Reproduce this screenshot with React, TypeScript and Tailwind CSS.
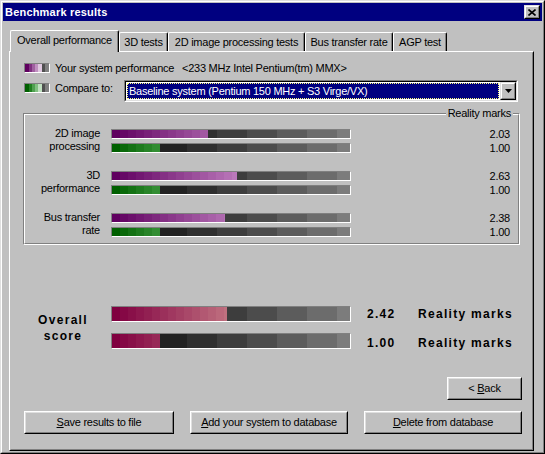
import React from 'react';

type Step = { w: number; c: string };

// Gray scale behind every meter (widths in px inside the 238px track)
const TRACK: Step[] = [
  { w: 45, c: '#181818' },
  { w: 30, c: '#222222' },
  { w: 30, c: '#2f2f2f' },
  { w: 30, c: '#3d3d3d' },
  { w: 30, c: '#4c4c4c' },
  { w: 30, c: '#5c5c5c' },
  { w: 30, c: '#6c6c6c' },
  { w: 13, c: '#7c7c7c' },
];

const hex = (r: number, g: number, b: number) =>
  '#' +
  [r, g, b]
    .map((v) => Math.max(0, Math.min(255, Math.round(v))).toString(16).padStart(2, '0'))
    .join('');

const purple = (k: number) => hex(96 + k * 6, k * 8, 96 + k * 6);
const green = (k: number) => hex(k * 10, 96 + k * 9, k * 10);
const crimson = (k: number) => hex(128 + k * 4.5, k * 8, 64 + k * 4.5);

function steps(width: number, tone: (k: number) => string): Step[] {
  const out: Step[] = [];
  for (let x = 0, k = 0; x < width; x += 8, k++) out.push({ w: Math.min(8, width - x), c: tone(k) });
  return out;
}

function Meter({ value, tone, tall = false }: { value: number; tone: (k: number) => string; tall?: boolean }) {
  const fill = steps(Math.round(value * 47.5), tone);
  return (
    <div
      className={`relative flex w-[240px] shrink-0 overflow-hidden border border-t-[#808080] border-l-[#808080] border-r-white border-b-white ${
        tall ? 'h-[16px]' : 'h-[10px]'
      }`}
    >
      {TRACK.map((s, i) => (
        <div key={i} className="h-full shrink-0" style={{ width: s.w, backgroundColor: s.c }} />
      ))}
      <div className="absolute inset-y-0 left-0 flex">
        {fill.map((s, i) => (
          <div key={i} className="h-full shrink-0" style={{ width: s.w, backgroundColor: s.c }} />
        ))}
      </div>
    </div>
  );
}

function Swatch({ colors }: { colors: Step[] }) {
  return (
    <div className="flex w-[26px] h-[10px] shrink-0 border border-t-[#808080] border-l-[#808080] border-r-white border-b-white">
      {colors.map((s, i) => (
        <div key={i} className="h-full shrink-0" style={{ width: s.w, backgroundColor: s.c }} />
      ))}
    </div>
  );
}

function Raised({ className = '', children }: { className?: string; children?: React.ReactNode }) {
  return (
    <div
      className={`bg-[#c0c0c0] border border-t-[#dfdfdf] border-l-[#dfdfdf] border-r-black border-b-black ${className}`}
    >
      <div className="w-full h-full border border-t-white border-l-white border-r-[#808080] border-b-[#808080] flex items-center justify-center">
        {children}
      </div>
    </div>
  );
}

function Button({ className = '', children }: { className?: string; children: React.ReactNode }) {
  return (
    <button
      type="button"
      className={`bg-[#c0c0c0] border border-t-white border-l-white border-r-black border-b-black ${className}`}
    >
      <div className="w-full h-full border border-t-[#dfdfdf] border-l-[#dfdfdf] border-r-[#808080] border-b-[#808080] flex items-center justify-center whitespace-nowrap">
        {children}
      </div>
    </button>
  );
}

const TABS = [
  { label: 'Overall performance', w: 'w-[109px]', active: true },
  { label: '3D tests', w: 'w-[49px]', active: false },
  { label: '2D image processing tests', w: 'w-[137px]', active: false },
  { label: 'Bus transfer rate', w: 'w-[88px]', active: false },
  { label: 'AGP test', w: 'w-[54px]', active: false },
];

const ROWS = [
  { label: ['2D image', 'processing'], you: 2.03, base: 1.0 },
  { label: ['3D', 'performance'], you: 2.63, base: 1.0 },
  { label: ['Bus transfer', 'rate'], you: 2.38, base: 1.0 },
];

const YOU_SWATCH: Step[] = [
  { w: 4, c: '#600060' },
  { w: 3, c: '#803080' },
  { w: 3, c: '#a060a0' },
  { w: 3, c: '#c090c0' },
  { w: 4, c: '#e0c8e0' },
  { w: 3, c: '#505050' },
  { w: 4, c: '#808080' },
];

const BASE_SWATCH: Step[] = [
  { w: 4, c: '#006000' },
  { w: 3, c: '#208020' },
  { w: 3, c: '#50a050' },
  { w: 3, c: '#80c080' },
  { w: 4, c: '#c0e0c0' },
  { w: 3, c: '#505050' },
  { w: 4, c: '#808080' },
];

export default function App() {
  return (
    <div className="w-[545px] h-[454px] bg-[#c0c0c0] border border-t-[#dfdfdf] border-l-[#dfdfdf] border-r-black border-b-black font-['Liberation_Sans',Arial,sans-serif] text-[11px] leading-[13px] tracking-[-0.25px] text-black select-none">
      <div className="h-full flex flex-col border border-t-white border-l-white border-r-[#808080] border-b-[#808080] p-px">
        {/* Title bar */}
        <div className="h-[18px] shrink-0 bg-[#000080] flex items-center justify-between px-[2px]">
          <span className="font-bold text-white tracking-[0.2px]">Benchmark results</span>
          <Raised className="w-[16px] h-[14px]">
            <svg width="8" height="7" viewBox="0 0 8 7">
              <path d="M0.5 0.5L7.5 6.5M7.5 0.5L0.5 6.5" stroke="black" strokeWidth="1.6" />
            </svg>
          </Raised>
        </div>

        {/* Client area */}
        <div className="flex-1 flex flex-col pt-[9px] pl-[6px] pr-[8px]">
          {/* Tab strip */}
          <div className="flex items-end pl-[1px]">
            {TABS.map((t) => (
              <div
                key={t.label}
                className={`${t.w} ${
                  t.active ? 'h-[22px] -mb-[1px] relative z-10' : 'h-[19px]'
                } bg-[#c0c0c0] border-t border-l border-r border-t-white border-l-white border-r-black rounded-t-[2px] shadow-[inset_-1px_0_0_#808080] flex justify-center pt-[3px] whitespace-nowrap`}
              >
                {t.label}
              </div>
            ))}
          </div>

          {/* Tab panel */}
          <div className="flex-1 flex flex-col border border-t-white border-l-white border-r-black border-b-black">
            <div className="flex-1 flex flex-col border border-t-[#c0c0c0] border-l-[#c0c0c0] border-r-[#808080] border-b-[#808080]">
              {/* Legend */}
              <div className="mt-[8px] ml-[13px] h-[14px] flex items-center">
                <Swatch colors={YOU_SWATCH} />
                <span className="ml-[5px] w-[127px] whitespace-nowrap">Your system performance</span>
                <span className="whitespace-nowrap">&lt;233 MHz Intel Pentium(tm) MMX&gt;</span>
              </div>
              <div className="mt-[5px] ml-[13px] h-[22px] flex items-start">
                <div className="mt-[3px]">
                  <Swatch colors={BASE_SWATCH} />
                </div>
                <span className="ml-[5px] w-[69px] mt-[2px] whitespace-nowrap">Compare to:</span>
                <div className="w-[394px] h-[22px] border border-t-[#808080] border-l-[#808080] border-r-white border-b-white">
                  <div className="h-full flex bg-white border border-t-black border-l-black border-r-[#dfdfdf] border-b-[#dfdfdf]">
                    <div className="flex-1 m-[1px] bg-[#000080] border border-dotted border-[#ffff7f] text-white pl-[1px] flex items-center whitespace-nowrap">
                      Baseline system (Pentium 150 MHz + S3 Virge/VX)
                    </div>
                    <Raised className="w-[16px] h-full">
                      <svg width="7" height="4" viewBox="0 0 7 4">
                        <polygon points="0,0 7,0 3.5,4" fill="black" />
                      </svg>
                    </Raised>
                  </div>
                </div>
              </div>

              {/* Reality marks group */}
              <div className="relative mt-[11px] ml-[12px] w-[497px] border border-t-[#808080] border-l-[#808080] border-r-white border-b-white">
                <span className="absolute -top-[7px] right-[6px] px-[2px] bg-[#c0c0c0] leading-[13px]">
                  Reality marks
                </span>
                <div className="flex flex-col gap-[14px] pt-[12px] pb-[4px] pr-[8px] border border-t-white border-l-white border-r-[#808080] border-b-[#808080]">
                  {ROWS.map((r) => (
                    <div key={r.label[0]} className="flex">
                      <div className="w-[75px] text-right leading-[13px]">
                        {r.label[0]}
                        <br />
                        {r.label[1]}
                      </div>
                      <div className="ml-[11px] flex flex-col">
                        <div className="h-[14px] flex items-center">
                          <Meter value={r.you} tone={purple} />
                        </div>
                        <div className="h-[14px] flex items-center">
                          <Meter value={r.base} tone={green} />
                        </div>
                      </div>
                      <div className="flex-1 flex flex-col items-end">
                        <div className="h-[14px] flex items-center">{r.you.toFixed(2)}</div>
                        <div className="h-[14px] flex items-center">{r.base.toFixed(2)}</div>
                      </div>
                    </div>
                  ))}
                </div>
              </div>

              {/* Overall score */}
              <div className="mt-[61px] ml-[12px] flex items-center font-bold text-[12px] leading-[16px] tracking-[1.3px]">
                <div className="w-[80px] text-center">
                  Overall
                  <br />
                  score
                </div>
                <div className="ml-[8px] flex flex-col gap-[11px]">
                  <div className="h-[16px] flex items-center">
                    <Meter value={2.42} tone={crimson} tall />
                    <span className="ml-[16px] w-[51px]">2.42</span>
                    <span className="whitespace-nowrap">Reality marks</span>
                  </div>
                  <div className="h-[16px] flex items-center">
                    <Meter value={1.0} tone={crimson} tall />
                    <span className="ml-[16px] w-[51px] pt-[4px]">1.00</span>
                    <span className="whitespace-nowrap pt-[4px]">Reality marks</span>
                  </div>
                </div>
              </div>

              {/* Navigation */}
              <div className="mt-[28px] mr-[10px] self-end">
                <Button className="w-[75px] h-[23px]">
                  &lt;&nbsp;<u>B</u>ack
                </Button>
              </div>
              <div className="mt-[11px] ml-[13px] flex gap-[16px]">
                <Button className="w-[150px] h-[23px]">
                  <span>
                    <u>S</u>ave results to file
                  </span>
                </Button>
                <Button className="w-[158px] h-[23px]">
                  <span>
                    <u>A</u>dd your system to database
                  </span>
                </Button>
                <Button className="w-[158px] h-[23px]">
                  <span>
                    <u>D</u>elete from database
                  </span>
                </Button>
              </div>
            </div>
          </div>
        </div>
      </div>
    </div>
  );
}
